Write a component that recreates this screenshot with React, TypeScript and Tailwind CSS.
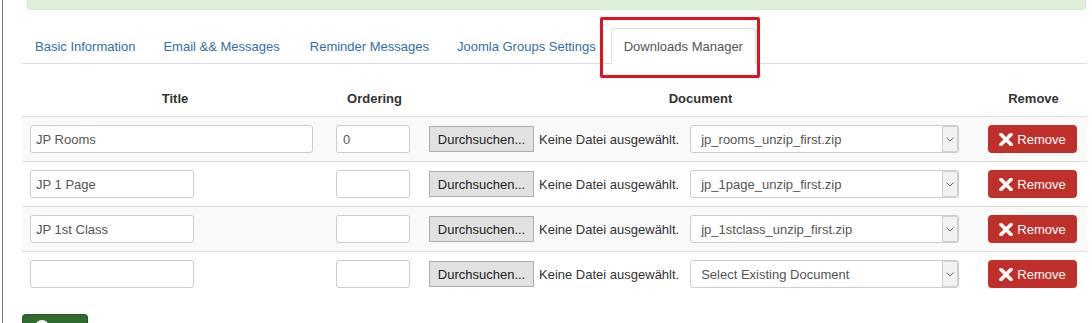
import React from "react";

const rows = [
  { title: "JP Rooms", wide: true, order: "0", doc: "jp_rooms_unzip_first.zip" },
  { title: "JP 1 Page", wide: false, order: "", doc: "jp_1page_unzip_first.zip" },
  { title: "JP 1st Class", wide: false, order: "", doc: "jp_1stclass_unzip_first.zip" },
  { title: "", wide: false, order: "", doc: "Select Existing Document" },
];

const tabs = [
  { t: "Basic Information", cls: "px-3" },
  { t: "Email && Messages", cls: "pl-3 pr-[14px]" },
  { t: "Reminder Messages", cls: "px-3" },
  { t: "Joomla Groups Settings", cls: "px-3" },
];

function XIcon() {
  return (
    <svg width="14" height="13" viewBox="0 0 14 13" className="shrink-0">
      <path d="M2 1.5 L12 11.5 M12 1.5 L2 11.5" stroke="white" strokeWidth="3.6" strokeLinecap="square" />
    </svg>
  );
}

function Chevron() {
  return (
    <svg width="8" height="5" viewBox="0 0 8 5">
      <path d="M0.5 0.5 L4 4 L7.5 0.5" stroke="#666" strokeWidth="1" fill="none" />
    </svg>
  );
}

export default function App() {
  return (
    <div
      className="relative flex h-[323px] w-[1092px] overflow-hidden bg-white text-[13px] leading-[18px] text-[#333]"
      style={{ fontFamily: '"Liberation Sans", Arial, sans-serif' }}
    >
      <div className="w-[2px] shrink-0" />
      <div className="w-px shrink-0 bg-[#7c7c7c]" />
      <div className="ml-[19px] w-[1065px] shrink-0">
        {/* alert */}
        <div className="ml-[5px] h-[10px] w-[1059px] rounded-b-[4px] border border-t-0 border-[#d6e9c6] bg-[#dff0d8]" />

        {/* tabs */}
        <div className="mt-[18px] flex h-[36px] border-b border-[#dddddd]">
          {tabs.map((t) => (
            <div
              key={t.t}
              className={`mr-[2px] flex h-[36px] items-center border border-transparent pt-[2px] leading-[20px] text-[#336ea7] ${t.cls}`}
            >
              {t.t}
            </div>
          ))}
          <div className="relative mr-[2px] flex h-[36px] items-center rounded-t-[4px] border border-b-white border-[#dddddd] bg-white px-3 pt-[2px] leading-[20px] text-[#555]">
            Downloads Manager
          </div>
        </div>

        {/* table */}
        <div className="mt-[18px]">
          <div className="grid grid-cols-[306px_93px_559px_107px] font-bold">
            <div className="p-2 text-center">Title</div>
            <div className="p-2 text-center">Ordering</div>
            <div className="p-2 text-center">Document</div>
            <div className="p-2 text-center">Remove</div>
          </div>
          {rows.map((r, i) => (
            <div
              key={i}
              className={`grid grid-cols-[306px_93px_559px_107px] border-t border-[#dddddd] ${i % 2 === 0 ? "bg-[#f9f9f9]" : "bg-white"}`}
            >
              <div className="flex items-center p-2">
                <div
                  className={`flex h-[28px] items-center rounded-[3px] border border-[#cccccc] bg-white px-[5px] pt-[1px] text-[#555] ${r.wide ? "w-[283px]" : "w-[164px]"}`}
                >
                  {r.title}
                </div>
              </div>
              <div className="flex items-center p-2">
                <div className="flex h-[28px] w-[74px] items-center rounded-[3px] border border-[#cccccc] bg-white px-[6px] pt-[1px] text-[#555]">
                  {r.order}
                </div>
              </div>
              <div className="flex items-center p-2">
                <div className="flex h-[26px] w-[105px] items-center justify-center border border-[#adadad] bg-[#e1e1e1] pt-[1px] text-[#222]">
                  Durchsuchen...
                </div>
                <div className="ml-[5px] pt-[1px] text-[#333]">Keine Datei ausgewählt.</div>
                <div className="ml-[11px] flex h-[28px] w-[269px] items-center justify-between rounded-[3px] border border-[#cccccc] bg-white pl-[10px] text-[#555]">
                  <span className="pt-[1px]">{r.doc}</span>
                  <div className="flex h-[26px] w-[16px] items-center justify-center rounded-r-[2px] border border-[#d0d0d0] bg-[#f2f2f2]">
                    <Chevron />
                  </div>
                </div>
              </div>
              <div className="flex items-center p-2">
                <div className="flex h-[28px] w-[89px] items-center justify-center gap-[4px] rounded-[4px] bg-[#c0302b] pt-[1px] text-white">
                  <XIcon />
                  <span>Remove</span>
                </div>
              </div>
            </div>
          ))}
        </div>

        {/* save button */}
        <div className="mt-[18px] flex h-[30px] w-[66px] items-start rounded-[4px] border border-dotted border-[#1c3f1c] bg-[#2f6a2f] pl-[12px] pt-[5px]">
          <div className="h-[14px] w-[14px] rounded-full bg-white" />
        </div>
      </div>

      {/* annotation highlight */}
      <div className="absolute left-[600px] top-[17px] h-[61px] w-[160px] rounded-[2px] border-[3px] border-[#e0141e]" />
    </div>
  );
}
